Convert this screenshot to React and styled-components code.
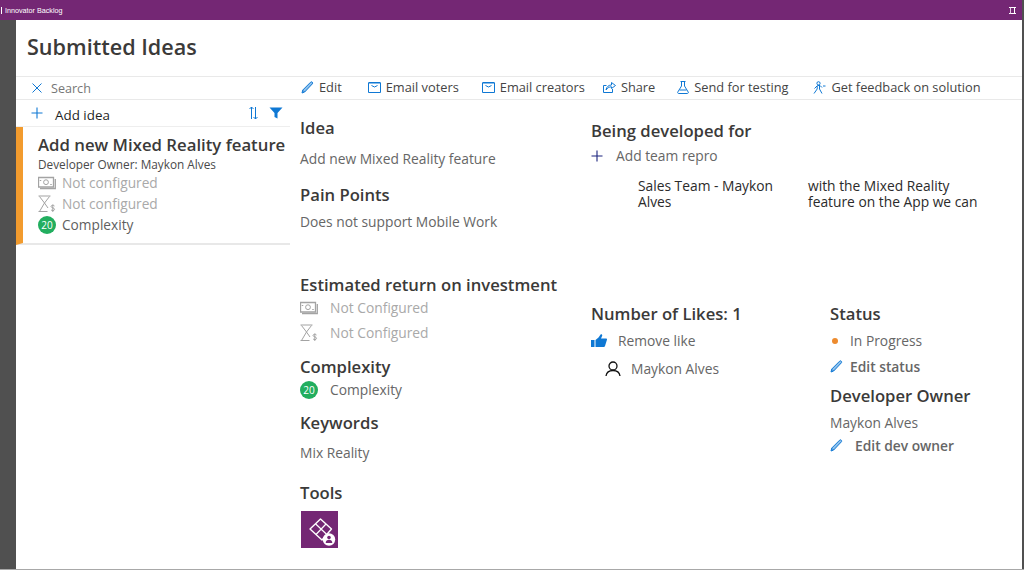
import React from "react";
import styled, { createGlobalStyle } from "styled-components";

const Global = createGlobalStyle`
  html, body { margin: 0; padding: 0; background: #fff; }
  body { font-family: "Open Sans", "Liberation Sans", sans-serif; color: #3b3a39; overflow: hidden; }
`;

const Page = styled.div`
  width: 1024px;
  height: 570px;
  display: flex;
  overflow: hidden;
  box-sizing: border-box;
  border-bottom: 1px solid #a8a8a8;
`;

const Window = styled.div`
  flex: 1;
  min-width: 0;
  display: flex;
  flex-direction: column;
`;

const TitleBar = styled.div`
  height: 20px;
  flex: none;
  background: #742774;
  display: flex;
  align-items: center;
  padding: 0 6px 0 1px;
  color: #fff;
  gap: 3px;
`;

const AppName = styled.span`
  flex: 1;
  font-family: "Liberation Sans", sans-serif;
  font-size: 7.2px;
  white-space: nowrap;
`;

const Tick = styled.i`
  width: 1px;
  height: 7px;
  background: #fff;
`;

const Body = styled.div`
  flex: 1;
  min-height: 0;
  display: flex;
`;

const Rail = styled.div`
  width: 16px;
  flex: none;
  background: #505050;
`;

const Edge = styled.div`
  width: 2px;
  flex: none;
  background: #505050;
`;

const Main = styled.div`
  flex: 1;
  min-width: 0;
  display: flex;
  flex-direction: column;
`;

const Header = styled.div`
  height: 57px;
  flex: none;
  box-sizing: border-box;
  border-bottom: 1px solid #e9e9e9;
  padding: 12px 0 0 11px;
  font-size: 21.6px;
  line-height: 30px;
  font-weight: 600;
  color: #3b3a39;
`;

const Split = styled.div`
  flex: 1;
  min-height: 0;
  display: flex;
`;

const ListPane = styled.div`
  width: 274px;
  flex: none;
`;

const SearchRow = styled.div`
  height: 23px;
  box-sizing: border-box;
  border-bottom: 1px solid #e9e9e9;
  display: flex;
  align-items: center;
  padding-left: 15px;
  gap: 8px;
  font-size: 12.6px;
  color: #767676;
`;

const AddRow = styled.div`
  height: 27px;
  box-sizing: border-box;
  border-bottom: 1px solid #eeeeee;
  display: flex;
  align-items: center;
  padding: 0 7px 0 15px;
  font-size: 13.4px;
  color: #1f1f1f;
`;

const AddLabel = styled.span`
  flex: 1;
  margin-left: 12px;
  padding-top: 4px;
`;

const SortIcon = styled.span`
  display: flex;
  margin-right: 10px;
`;

const Card = styled.div`
  height: 118px;
  box-sizing: border-box;
  border-left: 7px solid #f29b2e;
  border-bottom: 2px solid #e8e8e8;
  padding: 7px 0 0 15px;
  display: flex;
  flex-direction: column;
`;

const CardTitle = styled.div`
  font-size: 16.75px;
  line-height: 22px;
  font-weight: 600;
  color: #3b3a39;
  white-space: nowrap;
`;

const CardOwner = styled.div`
  font-size: 11.8px;
  line-height: 16px;
  color: #4a4a4a;
  white-space: nowrap;
`;

const CardLine = styled.div`
  height: 21px;
  display: flex;
  align-items: center;
  gap: 6px;
  font-size: 13.7px;
  color: ${(p) => (p.$muted ? "#a9a9a9" : "#5f5f5f")};
`;

const DetailPane = styled.div`
  flex: 1;
  min-width: 0;
  display: flex;
  flex-direction: column;
`;

const Toolbar = styled.div`
  height: 23px;
  flex: none;
  box-sizing: border-box;
  border-bottom: 1px solid #e9e9e9;
  display: flex;
  align-items: center;
  padding: 0 0 2px 11px;
  font-size: 12.8px;
  color: #444;
  white-space: nowrap;
`;

const ToolButton = styled.span`
  display: flex;
  align-items: center;
  gap: 5px;
  margin-right: ${(p) => p.$gap}px;
`;

const Columns = styled.div`
  flex: 1;
  display: flex;
  padding-left: 10px;
`;

const LeftColumn = styled.div`
  width: 291px;
  flex: none;
  padding-top: 18px;
`;

const RightColumn = styled.div`
  flex: 1;
  padding-top: 21px;
`;

const Heading = styled.div`
  font-size: 16.65px;
  line-height: 20px;
  font-weight: 600;
  color: #3b3a39;
  margin-top: ${(p) => p.$top || 0}px;
  white-space: nowrap;
`;

const Value = styled.div`
  font-size: 13.8px;
  line-height: 18px;
  color: #666;
  margin-top: ${(p) => p.$top || 0}px;
  white-space: nowrap;
`;

const IconLine = styled.div`
  display: flex;
  align-items: center;
  height: ${(p) => p.$height || 25}px;
  font-size: 13.8px;
  color: ${(p) => (p.$muted ? "#a9a9a9" : "#666")};
  font-weight: ${(p) => (p.$bold ? 600 : 400)};
  margin-left: ${(p) => p.$indent || 0}px;
  margin-top: ${(p) => p.$top || 0}px;
  white-space: nowrap;
`;

const IconSlot = styled.span`
  width: ${(p) => p.$width || 30}px;
  flex: none;
  display: flex;
  align-items: center;
`;

const TeamRow = styled.div`
  display: flex;
  margin: 10px 0 0 47px;
  font-size: 13.8px;
  line-height: 16px;
  color: #2b2b2b;
`;

const TeamName = styled.div`
  width: 170px;
  flex: none;
`;

const LowerRow = styled.div`
  display: flex;
  margin-top: 94px;
`;

const LikesColumn = styled.div`
  width: 239px;
  flex: none;
`;

const StatusColumn = styled.div`
  flex: 1;
`;

const ToolTile = styled.div`
  width: 37px;
  height: 37px;
  margin: 8px 0 0 1px;
  background: #742774;
`;

const Blue = "#0f78d4";
const IconGrey = "#a3a3a3";

const Svg = ({ w = 14, h = 14, box = "0 0 14 14", children }) => (
  <svg width={w} height={h} viewBox={box} fill="none" style={{ display: "block", flex: "none" }}>
    {children}
  </svg>
);

const PlusIcon = ({ color = Blue }) => (
  <Svg w={12} h={12} box="0 0 12 12">
    <path d="M6 .5v11M.5 6h11" stroke={color} strokeWidth="1.1" />
  </Svg>
);

const CloseIcon = () => (
  <Svg w={12} h={12} box="0 0 12 12">
    <path d="M1.5 1.5l9 9M10.5 1.5l-9 9" stroke={Blue} strokeWidth="1" />
  </Svg>
);

const SortArrows = () => (
  <Svg w={11} h={14} box="0 0 11 14">
    <path d="M3.5 13V1M1.5 3l2-2 2 2M7.5 1v12M5.5 11l2 2 2-2" stroke={Blue} strokeWidth="1" />
  </Svg>
);

const FilterIcon = () => (
  <Svg w={14} h={12} box="0 0 14 12">
    <path d="M.5 .5h13L8.5 6v5.5l-3-1.5V6z" fill={Blue} />
  </Svg>
);

const PencilIcon = () => (
  <Svg w={13} h={13} box="0 0 13 13">
    <path d="M1 12l.8-3L9.6 1.2c.5-.5 1.200-.5 1.700 0s.5 1.200 0 1.700L3.700 11z" fill="#8fc1ec" stroke={Blue} strokeWidth="1" />
    <path d="M2 9.500l1.500 1.500" stroke={Blue} strokeWidth="1" />
  </Svg>
);

const MailIcon = () => (
  <Svg w={13} h={11} box="0 0 13 11">
    <path d="M.5 1h12v9.500H.5z" stroke={Blue} strokeWidth="1" />
    <path d="M.5 .5h12M3.500 3.500l3 1.500 3-1.500" stroke={Blue} strokeWidth="1" />
  </Svg>
);

const ShareIcon = () => (
  <Svg w={13} h={12} box="0 0 13 12">
    <path d="M9.500 8v3.500h-9v-7h3" stroke={Blue} strokeWidth="1" />
    <path d="M3 9c.5-3.500 3-5 5.500-5V1.500l4 3-4 3V5.800C6 5.800 4.500 7 3 9z" stroke={Blue} strokeWidth="1" />
  </Svg>
);

const FlaskIcon = () => (
  <Svg w={12} h={13} box="0 0 12 13">
    <path d="M3.500 .5h5M4.500 .5v4.500L.8 11c-.4.8 0 1.500.8 1.500h8.800c.8 0 1.200-.7.800-1.500L7.500 5V.5M2.500 9h7" stroke={Blue} strokeWidth="1" />
  </Svg>
);

const FeedbackIcon = () => (
  <Svg w={13} h={13} box="0 0 13 13">
    <circle cx="5.500" cy="2.300" r="1.600" stroke={Blue} />
    <path d="M1.500 7.500l3-3h2.500l2 2M4.200 5v3L1 12.500M6.500 5v3l2.500 4.500M10 5h2.500" stroke={Blue} strokeWidth="1" />
  </Svg>
);

const MoneyIcon = () => (
  <Svg w={18} h={14} box="0 0 18 14">
    <path d="M.5 1.500h15V11H.5z" stroke={IconGrey} strokeWidth="1.300" />
    <path d="M2 12.500h15.300V3" stroke={IconGrey} strokeWidth="1.300" />
    <circle cx="8" cy="6.200" r="2.400" stroke={IconGrey} />
    <path d="M2.500 4v1M13 8v1" stroke={IconGrey} strokeWidth="1.500" />
  </Svg>
);

const HourglassIcon = () => (
  <Svg w={18} h={18} box="0 0 18 18">
    <path d="M.5 1h12M.5 16.500h9M1.500 1.500l5 6.500-5 8.500M11.500 1.500l-5 6.500 3.500 5" stroke={IconGrey} />
    <path d="M16.500 11c-.5-1-3.500-1-3.500.5s3.500 1 3.500 2.800-3 1.500-3.500.5M14.800 9.500v7.500" stroke={IconGrey} />
  </Svg>
);

const Badge = styled.span`
  width: ${(p) => p.$size}px;
  height: ${(p) => p.$size}px;
  border-radius: 50%;
  background: #22ae5f;
  color: #fff;
  font-size: 10px;
  display: flex;
  align-items: center;
  justify-content: center;
  flex: none;
`;

const ThumbIcon = () => (
  <Svg w={16} h={14} box="0 0 16 14">
    <path d="M0 6h3.500v7H0zM4.500 6l3-2.500L9.800 .3c1.300-.3 1.800.8 1.200 2L10 4.500h5c1 0 1.200 1 .8 1.800L14 12c-.3.8-.8 1-1.500 1h-8z" fill={Blue} />
  </Svg>
);

const PersonIcon = () => (
  <Svg w={16} h={16} box="0 0 16 16">
    <circle cx="8" cy="5" r="4" stroke="#111" strokeWidth="1.300" />
    <path d="M1 15c.5-3.500 3-5.500 7-5.500s6.500 2 7 5.500" stroke="#111" strokeWidth="1.300" />
  </Svg>
);

const PowerAppsIcon = () => (
  <Svg w={37} h={37} box="0 0 37 37">
    <path d="M9 18L19.500 8l11 10L21 29z" stroke="#fff" strokeWidth="1.400" strokeLinejoin="round" />
    <path d="M14.500 12.800L25.800 23.500M25 13L15 23.500" stroke="#fff" strokeWidth="1.200" />
    <circle cx="28" cy="28.500" r="6.200" fill="#fff" />
    <circle cx="28" cy="26.500" r="1.800" fill="#742774" />
    <path d="M24.700 32c0-2 1.500-3.200 3.300-3.200s3.300 1.200 3.300 3.200z" fill="#742774" />
  </Svg>
);

const WindowIcon = () => (
  <Svg w={7} h={7} box="0 0 7 7">
    <path d="M0 .5h7M0 6.500h7" stroke="#fff" strokeWidth="1" />
    <path d="M1.500 .5v6" stroke="#e6c8e6" strokeWidth="1" />
    <path d="M5.500 .5v6" stroke="#fff" strokeWidth="1" />
  </Svg>
);

const OrangeDot = styled.span`
  width: 6px;
  height: 6px;
  border-radius: 50%;
  background: #ed8b2e;
  margin-left: 2px;
`;

const tools = [
  { icon: <PencilIcon />, label: "Edit", gap: 26 },
  { icon: <MailIcon />, label: "Email voters", gap: 23 },
  { icon: <MailIcon />, label: "Email creators", gap: 18 },
  { icon: <ShareIcon />, label: "Share", gap: 22 },
  { icon: <FlaskIcon />, label: "Send for testing", gap: 25 },
  { icon: <FeedbackIcon />, label: "Get feedback on solution", gap: 0 },
];

export default function App() {
  return (
    <>
      <Global />
      <Page>
        <Window>
          <TitleBar>
            <Tick />
            <AppName>Innovator Backlog</AppName>
            <WindowIcon />
          </TitleBar>
          <Body>
            <Rail />
            <Main>
              <Header>Submitted Ideas</Header>
              <Split>
                <ListPane>
                  <SearchRow>
                    <CloseIcon />
                    Search
                  </SearchRow>
                  <AddRow>
                    <PlusIcon />
                    <AddLabel>Add idea</AddLabel>
                    <SortIcon>
                      <SortArrows />
                    </SortIcon>
                    <FilterIcon />
                  </AddRow>
                  <Card>
                    <CardTitle>Add new Mixed Reality feature</CardTitle>
                    <CardOwner>Developer Owner: Maykon Alves</CardOwner>
                    <CardLine $muted>
                      <MoneyIcon />
                      Not configured
                    </CardLine>
                    <CardLine $muted>
                      <HourglassIcon />
                      Not configured
                    </CardLine>
                    <CardLine>
                      <Badge $size={18}>20</Badge>
                      Complexity
                    </CardLine>
                  </Card>
                </ListPane>
                <DetailPane>
                  <Toolbar>
                    {tools.map((t) => (
                      <ToolButton key={t.label} $gap={t.gap}>
                        {t.icon}
                        {t.label}
                      </ToolButton>
                    ))}
                  </Toolbar>
                  <Columns>
                    <LeftColumn>
                      <Heading>Idea</Heading>
                      <Value $top={12}>Add new Mixed Reality feature</Value>
                      <Heading $top={17}>Pain Points</Heading>
                      <Value $top={8}>Does not support Mobile Work</Value>
                      <Heading $top={44}>Estimated return on investment</Heading>
                      <IconLine $muted>
                        <IconSlot>
                          <MoneyIcon />
                        </IconSlot>
                        Not Configured
                      </IconLine>
                      <IconLine $muted>
                        <IconSlot>
                          <HourglassIcon />
                        </IconSlot>
                        Not Configured
                      </IconLine>
                      <Heading $top={12}>Complexity</Heading>
                      <IconLine $height={23} $top={1}>
                        <IconSlot>
                          <Badge $size={18}>20</Badge>
                        </IconSlot>
                        Complexity
                      </IconLine>
                      <Heading $top={12}>Keywords</Heading>
                      <Value $top={11}>Mix Reality</Value>
                      <Heading $top={21}>Tools</Heading>
                      <ToolTile>
                        <PowerAppsIcon />
                      </ToolTile>
                    </LeftColumn>
                    <RightColumn>
                      <Heading>Being developed for</Heading>
                      <IconLine $top={2}>
                        <IconSlot $width={25}>
                          <PlusIcon color="#1a237e" />
                        </IconSlot>
                        Add team repro
                      </IconLine>
                      <TeamRow>
                        <TeamName>
                          Sales Team - Maykon
                          <br />
                          Alves
                        </TeamName>
                        <div>
                          with the Mixed Reality
                          <br />
                          feature on the App we can
                        </div>
                      </TeamRow>
                      <LowerRow>
                        <LikesColumn>
                          <Heading>Number of Likes: 1</Heading>
                          <IconLine $top={4}>
                            <IconSlot $width={27}>
                              <ThumbIcon />
                            </IconSlot>
                            Remove like
                          </IconLine>
                          <IconLine $indent={14} $top={3}>
                            <IconSlot $width={26}>
                              <PersonIcon />
                            </IconSlot>
                            Maykon Alves
                          </IconLine>
                        </LikesColumn>
                        <StatusColumn>
                          <Heading>Status</Heading>
                          <IconLine $top={4}>
                            <IconSlot $width={20}>
                              <OrangeDot />
                            </IconSlot>
                            In Progress
                          </IconLine>
                          <IconLine $bold $height={27}>
                            <IconSlot $width={20}>
                              <PencilIcon />
                            </IconSlot>
                            Edit status
                          </IconLine>
                          <Heading $top={6}>Developer Owner</Heading>
                          <Value $top={8}>Maykon Alves</Value>
                          <IconLine $bold $height={27}>
                            <IconSlot $width={25}>
                              <PencilIcon />
                            </IconSlot>
                            Edit dev owner
                          </IconLine>
                        </StatusColumn>
                      </LowerRow>
                    </RightColumn>
                  </Columns>
                </DetailPane>
              </Split>
            </Main>
          </Body>
        </Window>
        <Edge />
      </Page>
    </>
  );
}
